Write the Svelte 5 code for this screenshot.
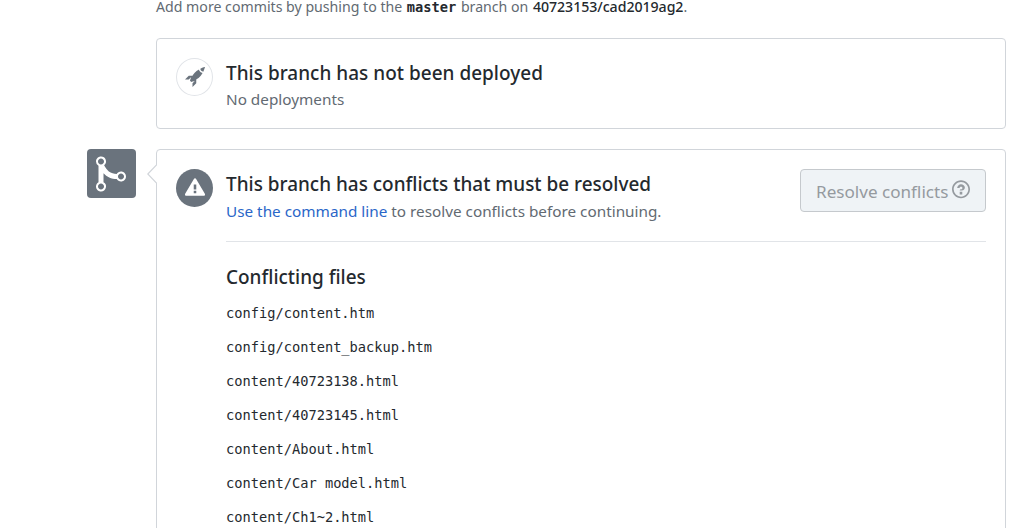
<script>
  const files = [
    'config/content.htm',
    'config/content_backup.htm',
    'content/40723138.html',
    'content/40723145.html',
    'content/About.html',
    'content/Car model.html',
    'content/Ch1~2.html'
  ];
</script>

<main>
  <p class="hint">
    <span class="lead">Add more commits by pushing to the</span>
    <code>master</code>
    <span class="on">branch on</span>
    <span class="repo"><strong>40723153/cad2019ag2</strong>.</span>
  </p>

  <section class="box deploy">
    <div class="circle outline">
      <svg width="20" height="20" viewBox="0 0 16 16"><path d="M12.17 3.83c-.27-.27-.47-.55-.63-.88-.16-.31-.27-.66-.34-1.02-.58.33-1.16.7-1.73 1.13-.58.44-1.14.94-1.69 1.48-.7.7-1.33 1.81-1.78 2.45H3L0 10h3l2-2c-.34.77-1.02 2.98-1 3l1 1c.02.02 2.23-.64 3-1l-2 2v3l3-3v-3c.64-.45 1.75-1.09 2.45-1.78.55-.55 1.05-1.13 1.47-1.7.44-.58.81-1.16 1.14-1.72-.36-.08-.7-.19-1.03-.34a3.39 3.39 0 0 1-.86-.63zM16 0s-.09.38-.3 1.06c-.2.7-.55 1.58-1.06 2.66-.7-.08-1.27-.33-1.66-.72-.39-.39-.63-.94-.7-1.64C13.36.84 14.23.48 14.92.28 15.62.08 16 0 16 0z" /></svg>
    </div>
    <div class="body">
      <h3 class="t1">This branch has not been deployed</h3>
      <p class="s1">No deployments</p>
    </div>
  </section>

  <div class="merge">
    <div class="avatar">
      <svg width="30" height="40" viewBox="0 0 12 16"><path d="M10 7c-.73 0-1.38.41-1.73 1.02V8C7.22 7.98 6 7.64 5.14 6.98c-.75-.58-1.5-1.61-1.89-2.44A1.993 1.993 0 0 0 2 .99C.89.99 0 1.89 0 3a2 2 0 0 0 1 1.72v6.56c-.59.35-1 .99-1 1.72 0 1.11.89 2 2 2a1.993 1.993 0 0 0 1-3.72V7.67c.67.7 1.44 1.27 2.3 1.69.86.42 2.03.63 2.97.64v-.02c.36.61 1 1.02 1.73 1.02 1.11 0 2-.89 2-2 0-1.11-.89-2-2-2zm-6.8 6c0 .66-.55 1.2-1.2 1.2-.65 0-1.2-.55-1.2-1.2 0-.65.55-1.2 1.2-1.2.65 0 1.2.55 1.2 1.2zM2 4.2C1.34 4.2.8 3.65.8 3c0-.65.55-1.2 1.2-1.2.65 0 1.2.55 1.2 1.2 0 .65-.55 1.2-1.2 1.2zm8 6c-.66 0-1.2-.55-1.2-1.2 0-.65.55-1.2 1.2-1.2.65 0 1.2.55 1.2 1.2 0 .65-.55 1.2-1.2 1.2z" /></svg>
    </div>
    <section class="box conflicts">
      <svg class="caret" width="10" height="20" viewBox="0 0 10 20"><path d="M10 .5 .8 10 10 19.5" /></svg>
      <div class="circle solid">
        <svg width="20" height="20" viewBox="0 0 16 16"><path d="M8.893 1.5c-.183-.31-.52-.5-.887-.5s-.703.19-.886.5L.138 13.499a.98.98 0 0 0 0 1.001c.193.31.53.501.886.501h13.964c.367 0 .704-.19.877-.5a1.03 1.03 0 0 0 .01-1.002L8.893 1.5zm.133 11.497H6.987v-2.003h2.039v2.003zm0-3.004H6.987V5.987h2.039v4.006z" /></svg>
      </div>
      <div class="body">
        <div class="top">
          <div>
            <h3 class="t2">This branch has conflicts that must be resolved</h3>
            <p class="s2"><a href="#cli">Use the command line</a> to resolve conflicts before continuing.</p>
          </div>
          <button disabled>
            <span>Resolve conflicts</span>
            <svg width="18" height="20.6" viewBox="0 0 14 16"><path d="M6 10h2v2H6v-2zm4-3.5C10 8.64 8 9 8 9H6c0-.55.45-1 1-1h.5c.28 0 .5-.22.5-.5v-1c0-.28-.22-.5-.5-.5h-1c-.28 0-.5.22-.5.5V7H4c0-1.5 1.5-3 3-3s3 1 3 2.5zM7 2.3c3.14 0 5.7 2.56 5.7 5.7s-2.56 5.7-5.7 5.7A5.71 5.71 0 0 1 1.3 8c0-3.14 2.56-5.7 5.7-5.7zM7 1C3.14 1 0 4.14 0 8s3.14 7 7 7 7-3.14 7-7-3.14-7-7-7z" /></svg>
          </button>
        </div>
        <h3 class="t3">Conflicting files</h3>
        <ul>
          {#each files as file}
            <li>{file}</li>
          {/each}
        </ul>
      </div>
    </section>
  </div>
</main>

<style>
  :global(body) { background: #fff; overflow: hidden; }
  main {
    box-sizing: border-box;
    width: 1015px;
    height: 528px;
    overflow: hidden;
    padding: 0 9px 0 87px;
    font-family: "Noto Sans", sans-serif;
    color: #24292e;
  }
  h3, p, ul { margin: 0; padding: 0; }
  svg { display: block; fill: currentColor; flex: none; }
  .hint {
    display: flex;
    gap: 4.6px;
    height: 38px;
    margin-left: 69px;
    font-size: 14.15px;
    line-height: 14px;
    color: #626a72;
    white-space: nowrap;
  }
  .hint code { font: bold 13.7px/15px "DejaVu Sans Mono", monospace; color: #24292e; }
  .hint strong { font-weight: 500; letter-spacing: -0.04px; color: #24292e; }
  .box {
    box-sizing: border-box;
    display: flex;
    gap: 13px;
    border: 1px solid #d1d5da;
    border-radius: 4px;
    padding: 19px;
  }
  .deploy { height: 91px; margin-left: 69px; }
  .circle {
    box-sizing: border-box;
    display: flex;
    align-items: center;
    justify-content: center;
    flex: none;
    width: 37px;
    height: 38px;
    border-radius: 50%;
  }
  .outline { border: 1px solid #e1e4e8; color: #6a737d; }
  .solid { background: #6a737d; color: #fff; }
  .solid svg { margin-bottom: 2px; }
  .body { flex: 1; min-width: 0; white-space: nowrap; }
  h3 { font-size: 18.95px; line-height: 30px; font-weight: 500; }
  .t1 { letter-spacing: 0.03px; }
  .s1 { margin-top: -1px; }
  p { font-size: 15.3px; line-height: 24px; color: #626a72; }
  .merge { display: flex; gap: 20px; margin-top: 20px; }
  .avatar {
    box-sizing: border-box;
    display: flex;
    align-items: center;
    flex: none;
    width: 49px;
    height: 49px;
    padding-left: 8.5px;
    border-radius: 4px;
    background: #6a737d;
    color: #fff;
  }
  .conflicts { position: relative; flex: 1; min-width: 0; height: 400px; }
  .caret { position: absolute; left: -10px; top: 14px; fill: #fff; stroke: #d1d5da; stroke-width: 1.2; }
  .top {
    display: flex;
    justify-content: space-between;
    align-items: flex-start;
    height: 72px;
    border-bottom: 1px solid #e1e4e8;
  }
  a { color: #2a66c8; text-decoration: none; }
  button {
    box-sizing: border-box;
    display: flex;
    gap: 5px;
    width: 186px;
    height: 43px;
    padding: 8px 0 0 15px;
    border: 1px solid #c5c9cd;
    border-radius: 4px;
    background: #eff3f6;
    color: #959a9f;
    font: 400 17.1px/28px "Noto Sans", sans-serif;
    white-space: nowrap;
  }
  button span { width: 131px; }
  button svg { margin-top: 1px; }
  .t3 { margin-top: 20px; }
  ul { list-style: none; margin-top: 4px; }
  li { font: 13.7px/34px "DejaVu Sans Mono", monospace; white-space: pre; }
</style>
